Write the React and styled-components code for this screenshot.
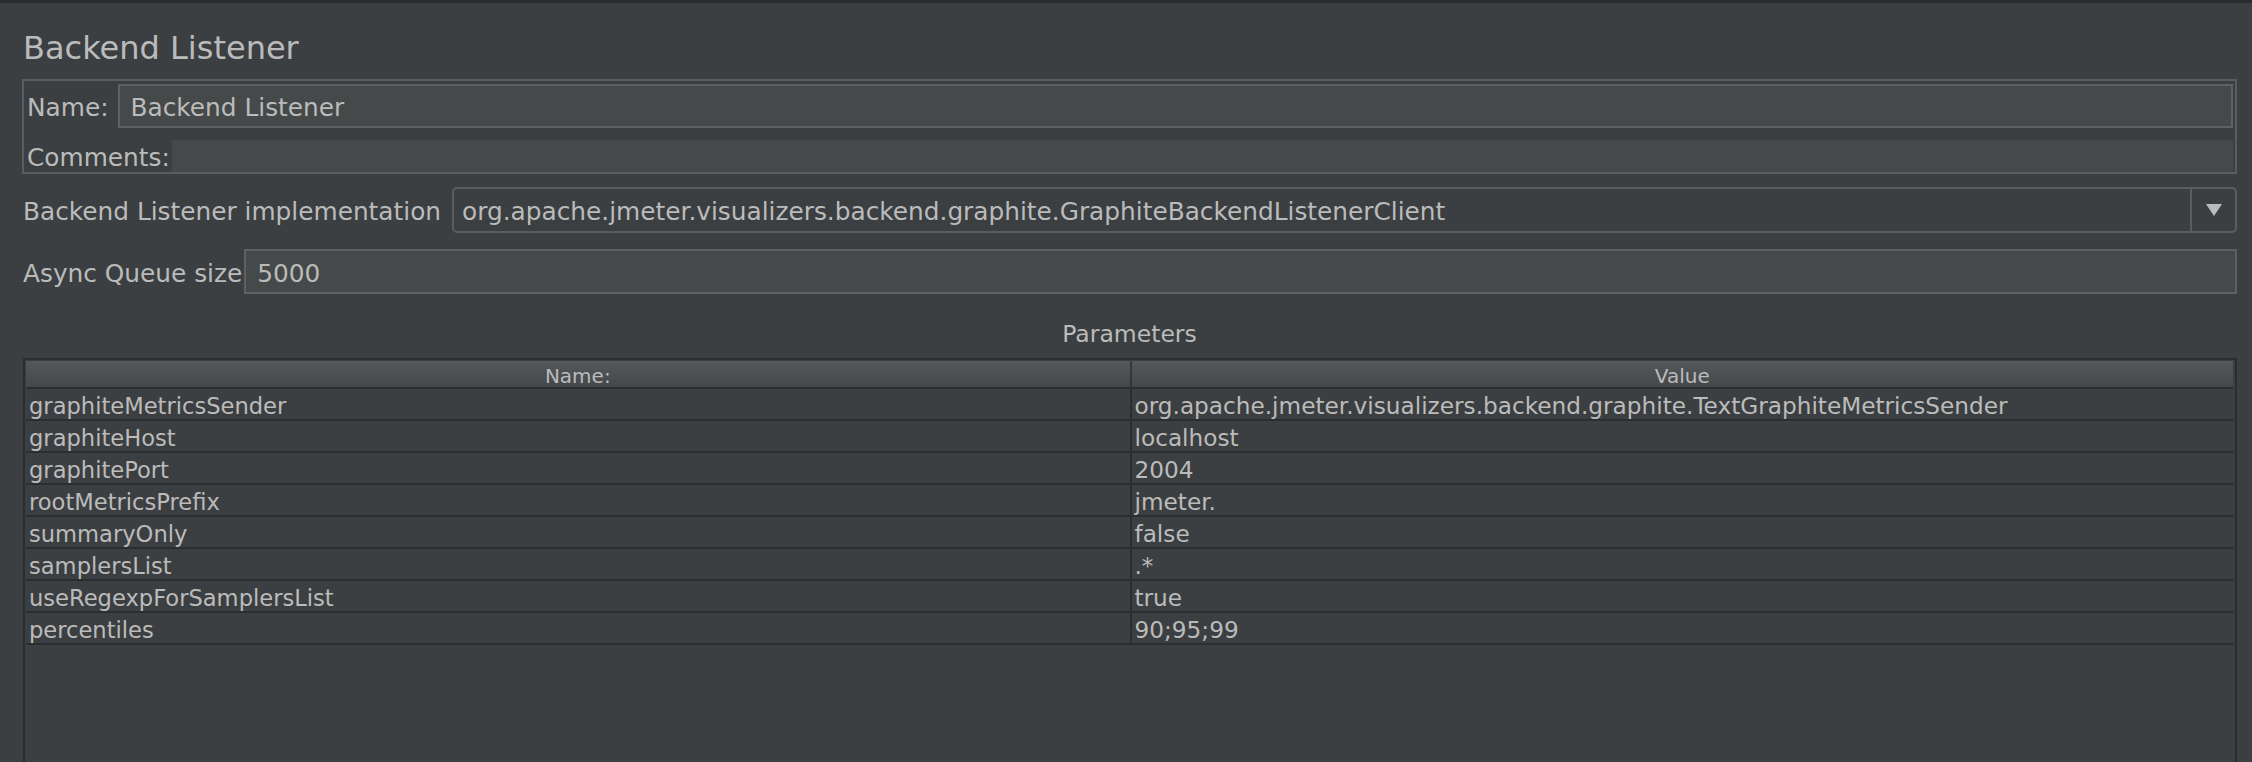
import React from 'react'
import styled, { createGlobalStyle } from 'styled-components'

const GlobalStyle = createGlobalStyle`
html, body {
  margin: 0;
  padding: 0;
  background: #3c3f41;
}
body {
  font-family: 'DejaVu Sans', 'Liberation Sans', sans-serif;
  color: #bbbbbb;
}
`

const Page = styled.div`
height: 100vh;
box-sizing: border-box;
display: flex;
flex-direction: column;
border-top: 3px solid #2b2b2b;
padding: 0 15px 0 22px;
overflow: hidden;
`

const Title = styled.h1`
margin: 27px 0 0 1px;
font-size: 32px;
line-height: 37px;
font-weight: normal;
`

const NamePanel = styled.div`
margin-top: 12px;
border: 2px solid #5a5d5f;
padding: 3px 2px 0 3px;
`

const FormRow = styled.div`
display: flex;
align-items: center;
height: ${(props) => props.h || 44}px;
margin-top: ${(props) => props.mt || 0}px;
`

const Label = styled.span`
font-size: 24.8px;
white-space: nowrap;
padding-top: 3px;
margin-left: ${(props) => props.ml || 0}px;
`

const Field = styled.div`
flex: 1;
height: 100%;
box-sizing: border-box;
display: flex;
align-items: center;
margin-left: ${(props) => props.ml || 0}px;
padding: 3px 11px 0;
background: #45494a;
border: 2px solid #5e6163;
font-size: 24.8px;
`

const CommentArea = styled.div`
flex: 1;
height: 100%;
margin-left: 2px;
background: #45494a;
`

const Combo = styled.div`
flex: 1;
height: 100%;
box-sizing: border-box;
display: flex;
margin-left: 11px;
border: 2px solid #5a5d5f;
border-radius: 5px;
`

const ComboText = styled.div`
flex: 1;
display: flex;
align-items: center;
padding: 3px 0 0 8px;
font-size: 24.8px;
white-space: nowrap;
`

const ComboButton = styled.div`
width: 43px;
display: flex;
align-items: center;
justify-content: center;
border-left: 2px solid #5a5d5f;
`

const SectionTitle = styled.div`
margin-top: 26px;
padding-top: 2px;
text-align: center;
font-size: 23.5px;
line-height: 25px;
`

const Table = styled.div`
flex: 1;
min-height: 0;
margin: 11px 0 0 1px;
border: 2px solid #2b2d2f;
border-bottom: none;
padding: 1px 2px 0 1px;
`

const HeaderRow = styled.div`
display: grid;
grid-template-columns: 1fr 1fr;
height: 26px;
background: linear-gradient(#54585b, #44484a);
border-bottom: 2px solid #2b2d2f;
`

const HeaderCell = styled.div`
text-align: center;
font-size: 20px;
line-height: 21px;
padding-top: 5px;
box-sizing: border-box;
${(props) => props.divider && 'border-left: 2px solid #34373a;'}
`

const Row = styled.div`
display: grid;
grid-template-columns: 1fr 1fr;
height: 30px;
border-bottom: 2px solid #2b2d2f;
`

const Cell = styled.div`
font-size: ${(props) => (props.divider ? 23.2 : 22.6)}px;
line-height: 26px;
padding: 4px 0 0 3px;
box-sizing: border-box;
white-space: nowrap;
overflow: hidden;
${(props) => props.divider && 'border-left: 2px solid #2b2d2f;'}
`

const params = [
  ['graphiteMetricsSender', 'org.apache.jmeter.visualizers.backend.graphite.TextGraphiteMetricsSender'],
  ['graphiteHost', 'localhost'],
  ['graphitePort', '2004'],
  ['rootMetricsPrefix', 'jmeter.'],
  ['summaryOnly', 'false'],
  ['samplersList', '.*'],
  ['useRegexpForSamplersList', 'true'],
  ['percentiles', '90;95;99'],
]

const App = () => {
  return (
    <>
      <GlobalStyle />
      <Page>
        <Title>Backend Listener</Title>
        <NamePanel>
          <FormRow h={44}>
            <Label>Name:</Label>
            <Field ml={9}>Backend Listener</Field>
          </FormRow>
          <FormRow h={32} mt={12}>
            <Label>Comments:</Label>
            <CommentArea />
          </FormRow>
        </NamePanel>
        <FormRow h={46} mt={13}>
          <Label ml={1}>Backend Listener implementation</Label>
          <Combo>
            <ComboText>org.apache.jmeter.visualizers.backend.graphite.GraphiteBackendListenerClient</ComboText>
            <ComboButton>
              <svg width="16" height="12" viewBox="0 0 16 12">
                <polygon points="0,0 16,0 8,12" fill="#bbbbbb" />
              </svg>
            </ComboButton>
          </Combo>
        </FormRow>
        <FormRow h={45} mt={16}>
          <Label ml={1}>Async Queue size</Label>
          <Field ml={2}>5000</Field>
        </FormRow>
        <SectionTitle>Parameters</SectionTitle>
        <Table>
          <HeaderRow>
            <HeaderCell>Name:</HeaderCell>
            <HeaderCell divider>Value</HeaderCell>
          </HeaderRow>
          {params.map(([name, value]) => (
            <Row key={name}>
              <Cell>{name}</Cell>
              <Cell divider>{value}</Cell>
            </Row>
          ))}
        </Table>
      </Page>
    </>
  )
}

export default App
